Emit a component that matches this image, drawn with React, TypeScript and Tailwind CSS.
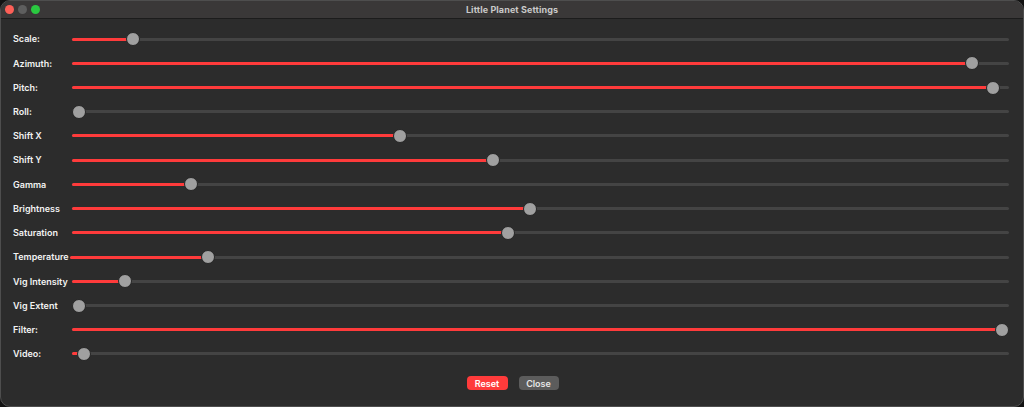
type Setting = { label: string; value: number; labelWidth?: string };

const settings: Setting[] = [
  { label: "Scale:", value: 0.058 },
  { label: "Azimuth:", value: 0.968 },
  { label: "Pitch:", value: 0.99 },
  { label: "Roll:", value: 0 },
  { label: "Shift X", value: 0.348 },
  { label: "Shift Y", value: 0.4486 },
  { label: "Gamma", value: 0.1218 },
  { label: "Brightness", value: 0.4886 },
  { label: "Saturation", value: 0.4648 },
  { label: "Temperature", value: 0.142, labelWidth: "w-[57px]" },
  { label: "Vig Intensity", value: 0.0503 },
  { label: "Vig Extent", value: 0 },
  { label: "Filter:", value: 1 },
  { label: "Video:", value: 0.005 },
];

const Slider = ({ value }: { value: number }) => (
  <div className="relative flex-1 h-[14px] mr-[14px]">
    <div className="absolute left-0 right-0 top-[5.5px] h-[3px] rounded-full bg-[#444444]" />
    {value > 0 && (
      <div
        className="absolute left-0 top-[5.5px] h-[3px] rounded-full bg-[#ff3b3b]"
        style={{ width: `calc(7px + ${value} * (100% - 14px))` }}
      />
    )}
    <div
      className="absolute top-0 w-[14px] h-[14px] rounded-full bg-[#a0a0a0] border border-[#262626]"
      style={{ left: `calc(${value} * (100% - 14px))` }}
    />
  </div>
);

export default function App() {
  return (
    <div className="w-[1024px] h-[407px] bg-[#121212] font-['Inter','Liberation_Sans',sans-serif]">
      <div className="w-full h-full flex flex-col rounded-[10px] border border-[#4e4e4e] bg-[#2c2c2c] overflow-hidden">
        <div className="relative h-[18px] shrink-0 flex items-center justify-center bg-[#3a3838] border-b border-[#1c1c1c]">
          <div className="absolute left-[4px] top-[4px] flex gap-[4px]">
            <span className="w-[9px] h-[9px] rounded-full bg-[#fe5f57]" />
            <span className="w-[9px] h-[9px] rounded-full bg-[#5e5e5e]" />
            <span className="w-[9px] h-[9px] rounded-full bg-[#2ac840]" />
          </div>
          <span className="text-[9px] font-bold text-[#c9c9c9] tracking-[0.1px]">
            Little Planet Settings
          </span>
        </div>
        <div className="flex flex-col pt-[8px]">
          {settings.map((s) => (
            <div key={s.label} className="flex items-center h-[24.23px] pl-[12px]">
              <span
                className={`${s.labelWidth ?? "w-[59px]"} shrink-0 whitespace-nowrap text-[9px] font-semibold text-[#f2f2f2]`}
              >
                {s.label}
              </span>
              <Slider value={s.value} />
            </div>
          ))}
        </div>
        <div className="flex justify-center gap-[11px] mt-[10px] pl-[1px]">
          <button className="w-[41px] h-[14px] rounded-[4px] bg-[#ff3b3b] text-[9px] font-semibold text-white leading-none">
            Reset
          </button>
          <button className="w-[40px] h-[14px] rounded-[4px] bg-[#5c5c5c] text-[9px] font-semibold text-[#e6e6e6] leading-none">
            Close
          </button>
        </div>
      </div>
    </div>
  );
}
